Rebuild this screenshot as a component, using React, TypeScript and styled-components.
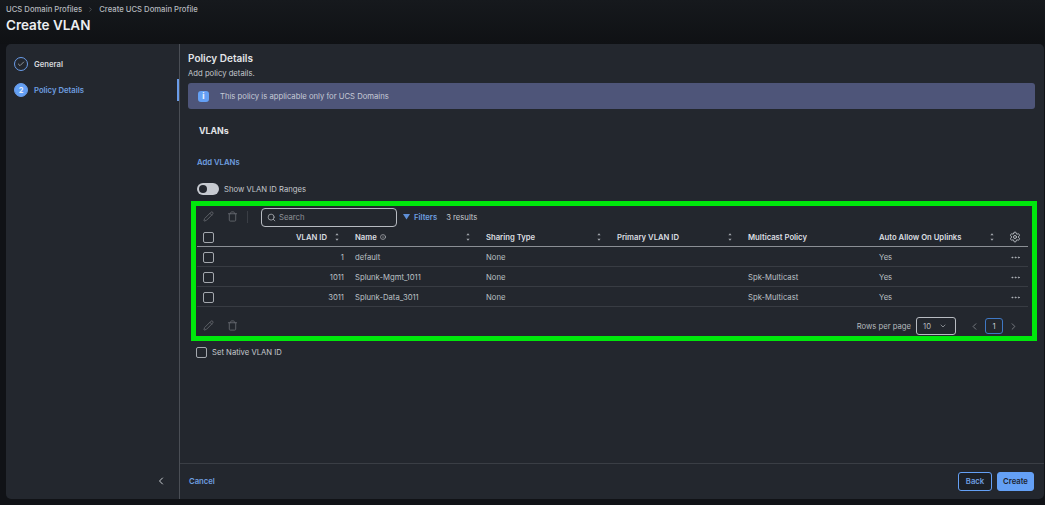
import { ChevronDown, ChevronLeft, ChevronRight, Check, Ellipsis, Info, Pencil, Search, Settings, Trash } from 'lucide-react';
import styled, { createGlobalStyle } from 'styled-components';

const GlobalStyle = createGlobalStyle`
  html, body {
    margin: 0;
    padding: 0;
    height: 100%;
    overflow: hidden;
    background: #101216;
  }
  * {
    box-sizing: border-box;
  }
`;

const Page = styled.div`
  width: 1045px;
  height: 505px;
  display: flex;
  flex-direction: column;
  background: #101216;
  color: #c4c8cd;
  font-family: Inter, "Liberation Sans", sans-serif;
  font-size: 7.7px;
`;

const Header = styled.header`
  height: 44px;
  padding: 4px 6px 0;
  background: linear-gradient(#16191d, #0f1114);
`;

const Breadcrumbs = styled.div`
  display: flex;
  align-items: center;
  gap: 5px;
  height: 11px;
  font-weight: 500;
  color: #b4b8bd;
`;

const Title = styled.h1`
  margin: 2px 0 0;
  font-size: 13.5px;
  line-height: 17px;
  font-weight: 600;
  color: #eceef0;
`;

const Panel = styled.div`
  flex: 1;
  margin: 0 1px 6px 6px;
  display: flex;
  background: #23272e;
  border-radius: 5px;
  overflow: hidden;
`;

const Sidebar = styled.aside`
  position: relative;
  width: 174px;
  flex: none;
  display: flex;
  flex-direction: column;
  padding: 11px 8px 0;
  border-right: 1px solid #4a4e55;
`;

const Step = styled.div<{ $active?: boolean }>`
  display: flex;
  align-items: center;
  gap: 6px;
  height: 18px;
  margin-bottom: 8px;
  font-weight: 600;
  color: ${(p) => (p.$active ? '#6f9fe0' : '#d4d7db')};
`;

const StepDot = styled.span<{ $filled?: boolean }>`
  width: 14px;
  height: 14px;
  border-radius: 50%;
  display: flex;
  align-items: center;
  justify-content: center;
  border: 1px solid #6a9ce8;
  background: ${(p) => (p.$filled ? '#64a0f5' : 'transparent')};
  color: ${(p) => (p.$filled ? '#e8f0fb' : '#c9cdd2')};
  font-size: 7.5px;
  font-weight: 700;
`;

const ActiveMark = styled.span`
  position: absolute;
  right: 0;
  top: 35px;
  width: 2px;
  height: 22px;
  background: #6a9ce8;
`;

const Collapse = styled.button`
  margin-top: auto;
  align-self: flex-end;
  display: flex;
  width: 12px;
  height: 12px;
  padding: 0;
  margin-right: 4px;
  margin-bottom: 12px;
  border: 0;
  background: none;
  color: #c9cdd2;
`;

const Main = styled.main`
  flex: 1;
  min-width: 0;
  display: flex;
  flex-direction: column;
`;

const Content = styled.div`
  flex: 1;
  padding: 8px 9px 0 8px;
`;

const PanelTitle = styled.h2`
  margin: 0;
  font-size: 10px;
  line-height: 13px;
  font-weight: 600;
  color: #e2e4e7;
`;

const SubTitle = styled.p`
  margin: 3px 0 0;
  line-height: 11px;
`;

const Banner = styled.div`
  margin-top: 4px;
  height: 26px;
  display: flex;
  align-items: center;
  gap: 11px;
  padding-left: 10px;
  border-radius: 3px;
  background: #4e5579;
  color: #c6cad6;
`;

const BannerIcon = styled.span`
  width: 11px;
  height: 11px;
  display: flex;
  align-items: center;
  justify-content: center;
  border-radius: 3px;
  background: #64a0f5;
  color: #e9f1fc;
  font-size: 8px;
  font-weight: 800;
`;

const SectionTitle = styled.h3`
  margin: 16px 0 0 11px;
  font-size: 8.8px;
  line-height: 12px;
  font-weight: 700;
  color: #e2e4e7;
`;

const AddLink = styled.a`
  display: block;
  margin: 20px 0 0 9px;
  line-height: 12px;
  font-weight: 600;
  color: #6f9fe0;
`;

const ToggleRow = styled.label`
  display: flex;
  align-items: center;
  gap: 5px;
  margin: 14px 0 0 9px;
  height: 12px;
`;

const ToggleTrack = styled.span`
  width: 22px;
  height: 12px;
  padding: 2px;
  border-radius: 6px;
  background: #c6cad0;
`;

const ToggleKnob = styled.span`
  display: block;
  width: 8px;
  height: 8px;
  border-radius: 50%;
  background: #23272e;
`;

const Highlight = styled.section`
  width: 846px;
  height: 140px;
  margin: 6px 0 0 3px;
  padding: 0 4px 0 1px;
  border: 5px solid #00e80c;
`;

const Toolbar = styled.div`
  height: 22px;
  display: flex;
  align-items: center;
  padding: 0 6px;
`;

const IconAction = styled.span`
  display: flex;
  width: 12px;
  height: 12px;
  margin-right: 12px;
  color: #62666c;
`;

const Divider = styled.span`
  width: 1px;
  height: 12px;
  margin: 0 13px 0 -4px;
  background: #3a3e45;
`;

const SearchBox = styled.div`
  width: 136px;
  height: 19px;
  display: flex;
  align-items: center;
  gap: 3px;
  padding-left: 5px;
  border: 1px solid #b8bcc2;
  border-radius: 4px;
  color: #8f9399;
`;

const FilterButton = styled.span`
  display: flex;
  align-items: center;
  gap: 4px;
  margin-left: 6px;
  font-weight: 600;
  color: #6f9fe0;
`;

const ResultCount = styled.span`
  margin-left: 9px;
`;

const Row = styled.div<{ $head?: boolean }>`
  height: ${(p) => (p.$head ? '19px' : '20px')};
  padding-top: ${(p) => (p.$head ? '0' : '1px')};
  display: grid;
  grid-template-columns: 30px 128px 131px 131px 131px 131px 124px 24px;
  align-items: center;
  border-bottom: ${(p) => (p.$head ? '1px solid #8b8f95' : '1px solid #383c43')};
  font-weight: ${(p) => (p.$head ? 600 : 400)};
  color: ${(p) => (p.$head ? '#dcdfe2' : '#bcc0c5')};
`;

const CheckCell = styled.span`
  padding-left: 6px;
  display: flex;
`;

const CheckBox = styled.span`
  display: block;
  width: 11px;
  height: 11px;
  flex: none;
  border: 1.3px solid #a4a8ae;
  border-radius: 2px;
`;

const IdCell = styled.span<{ $head?: boolean }>`
  display: flex;
  align-items: center;
  justify-content: flex-end;
  gap: 7px;
  padding-right: ${(p) => (p.$head ? '15px' : '11px')};
`;

const Cell = styled.span<{ $last?: boolean }>`
  display: flex;
  align-items: center;
  justify-content: space-between;
  padding-right: ${(p) => (p.$last ? '8px' : '15px')};
`;

const NameLabel = styled.span`
  display: flex;
  align-items: center;
  gap: 3px;
`;

const ActionCell = styled.span`
  display: flex;
  justify-content: center;
  color: #b4b8bd;
`;

const TableFooter = styled.div`
  height: 29px;
  display: flex;
  align-items: flex-end;
  padding: 0 9px 1px 6px;
`;

const FooterIcons = styled.div`
  display: flex;
  height: 18px;
  align-items: center;
`;

const Pager = styled.div`
  margin-left: auto;
  display: flex;
  align-items: center;
  height: 18px;
  color: #b4b8bd;
`;

const RowsSelect = styled.span`
  width: 40px;
  height: 18px;
  margin: 0 13px 0 5px;
  display: flex;
  align-items: center;
  justify-content: space-between;
  padding: 0 8px 0 6px;
  border: 1px solid #b8bcc2;
  border-radius: 3px;
`;

const PageNumber = styled.span`
  width: 18px;
  height: 16px;
  margin: 0 5px;
  display: flex;
  align-items: center;
  justify-content: center;
  border: 1px solid #3f78c4;
  border-radius: 3px;
  color: #c9cdd2;
`;

const PagerArrow = styled.span`
  display: flex;
  color: #7c8086;
`;

const NativeRow = styled.label`
  display: flex;
  align-items: center;
  gap: 5px;
  margin: 5px 0 0 8px;
  height: 12px;
`;

const Footer = styled.footer`
  height: 36px;
  flex: none;
  display: flex;
  align-items: center;
  justify-content: space-between;
  padding: 0 10px 0 9px;
  border-top: 1px solid #3a3e45;
`;

const CancelLink = styled.a`
  font-weight: 600;
  color: #6f9fe0;
`;

const Buttons = styled.div`
  display: flex;
  gap: 5px;
`;

const Button = styled.button<{ $primary?: boolean }>`
  height: 19px;
  padding: 0;
  width: ${(p) => (p.$primary ? '37px' : '34px')};
  border: 1px solid #64a0f5;
  border-radius: 3px;
  background: ${(p) => (p.$primary ? '#64a0f5' : '#1c2026')};
  color: ${(p) => (p.$primary ? '#1c2430' : '#6f9fe0')};
  font-family: inherit;
  font-size: 7.7px;
  font-weight: 600;
`;

const SortIcon = () => (
  <svg width="6" height="10" viewBox="0 0 6 10" fill="#a4a8ae">
    <path d="M3 1.2 4.6 3.2H1.4Z" />
    <path d="M3 8.8 1.4 6.8H4.6Z" />
  </svg>
);

const FunnelIcon = () => (
  <svg width="7" height="6" viewBox="0 0 7 6" fill="#5f8fd6">
    <path d="M0 0H7L3.5 5.5Z" />
  </svg>
);

const rows = [
  { id: '1', name: 'default', multicast: '' },
  { id: '1011', name: 'Splunk-Mgmt_1011', multicast: 'Spk-Multicast' },
  { id: '3011', name: 'Splunk-Data_3011', multicast: 'Spk-Multicast' },
];

const App = () => {
  return (
    <Page>
      <GlobalStyle />
      <Header>
        <Breadcrumbs>
          <span>UCS Domain Profiles</span>
          <ChevronRight size={7} color="#6c7076" />
          <span>Create UCS Domain Profile</span>
        </Breadcrumbs>
        <Title>Create VLAN</Title>
      </Header>
      <Panel>
        <Sidebar>
          <Step>
            <StepDot><Check size={8} /></StepDot>
            General
          </Step>
          <Step $active>
            <StepDot $filled>2</StepDot>
            Policy Details
          </Step>
          <ActiveMark />
          <Collapse><ChevronLeft size={12} /></Collapse>
        </Sidebar>
        <Main>
          <Content>
            <PanelTitle>Policy Details</PanelTitle>
            <SubTitle>Add policy details.</SubTitle>
            <Banner>
              <BannerIcon>i</BannerIcon>
              This policy is applicable only for UCS Domains
            </Banner>
            <SectionTitle>VLANs</SectionTitle>
            <AddLink>Add VLANs</AddLink>
            <ToggleRow>
              <ToggleTrack><ToggleKnob /></ToggleTrack>
              Show VLAN ID Ranges
            </ToggleRow>
            <Highlight>
              <Toolbar>
                <IconAction><Pencil size={11} /></IconAction>
                <IconAction><Trash size={11} /></IconAction>
                <Divider />
                <SearchBox>
                  <Search size={9} color="#b4b8bd" />
                  Search
                </SearchBox>
                <FilterButton><FunnelIcon />Filters</FilterButton>
                <ResultCount>3 results</ResultCount>
              </Toolbar>
              <Row $head>
                <CheckCell><CheckBox /></CheckCell>
                <IdCell $head>VLAN ID <SortIcon /></IdCell>
                <Cell>
                  <NameLabel>Name <Info size={6} /></NameLabel>
                  <SortIcon />
                </Cell>
                <Cell>Sharing Type <SortIcon /></Cell>
                <Cell>Primary VLAN ID <SortIcon /></Cell>
                <Cell>Multicast Policy</Cell>
                <Cell $last>Auto Allow On Uplinks <SortIcon /></Cell>
                <ActionCell><Settings size={12} /></ActionCell>
              </Row>
              {rows.map((row) => (
                <Row key={row.id}>
                  <CheckCell><CheckBox /></CheckCell>
                  <IdCell>{row.id}</IdCell>
                  <Cell>{row.name}</Cell>
                  <Cell>None</Cell>
                  <Cell />
                  <Cell>{row.multicast}</Cell>
                  <Cell $last>Yes</Cell>
                  <ActionCell><Ellipsis size={11} /></ActionCell>
                </Row>
              ))}
              <TableFooter>
                <FooterIcons>
                  <IconAction><Pencil size={11} /></IconAction>
                  <IconAction><Trash size={11} /></IconAction>
                </FooterIcons>
                <Pager>
                  Rows per page
                  <RowsSelect>10 <ChevronDown size={8} /></RowsSelect>
                  <PagerArrow><ChevronLeft size={11} /></PagerArrow>
                  <PageNumber>1</PageNumber>
                  <PagerArrow><ChevronRight size={11} /></PagerArrow>
                </Pager>
              </TableFooter>
            </Highlight>
            <NativeRow>
              <CheckBox />
              Set Native VLAN ID
            </NativeRow>
          </Content>
          <Footer>
            <CancelLink>Cancel</CancelLink>
            <Buttons>
              <Button>Back</Button>
              <Button $primary>Create</Button>
            </Buttons>
          </Footer>
        </Main>
      </Panel>
    </Page>
  );
};

export default App;
